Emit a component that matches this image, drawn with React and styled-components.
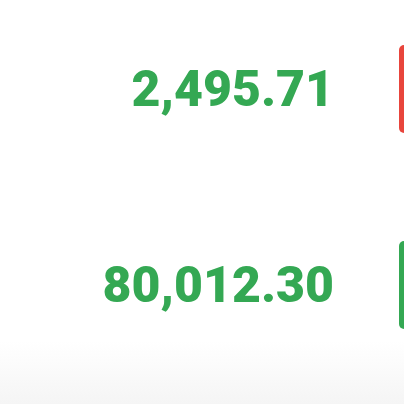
import React from "react";
import styled, { createGlobalStyle } from "styled-components";

const GlobalStyle = createGlobalStyle`
  html, body {
    margin: 0;
    padding: 0;
    background: #ffffff;
  }
  body {
    font-family: Roboto, "Liberation Sans", Arial, sans-serif;
  }
`;

const rows = [
  { value: "2,495.71", tone: "red" },
  { value: "80,012.30", tone: "green" },
];

const tones = {
  red: "#e8453c",
  green: "#34a853",
};

function App() {
  return (
    <>
      <GlobalStyle />
      <Page>
        <List>
          {rows.map((row) => (
            <Row key={row.value}>
              <Value>{row.value}</Value>
              <Bar $tone={row.tone} />
            </Row>
          ))}
        </List>
        <Footer />
      </Page>
    </>
  );
}

export default App;

const Page = styled.div`
  width: 404px;
  height: 404px;
  display: flex;
  flex-direction: column;
  overflow: hidden;
  background: #ffffff;
`;

const List = styled.div`
  display: flex;
  flex-direction: column;
  gap: 108px;
  padding-top: 45px;
`;

const Row = styled.div`
  height: 88px;
  display: flex;
  align-items: center;
  justify-content: flex-end;
`;

const Value = styled.div`
  font-family: Roboto, "Liberation Sans", Arial, sans-serif;
  font-weight: 900;
  font-size: 50px;
  line-height: 1;
  color: #34a853;
  margin-right: 65px;
  letter-spacing: 0;
`;

const Bar = styled.div`
  width: 5px;
  height: 88px;
  flex-shrink: 0;
  border-radius: 7px 0 0 7px;
  background: ${({ $tone }) => tones[$tone]};
`;

const Footer = styled.div`
  flex: 1;
  margin-top: 12px;
  background: linear-gradient(#ffffff, #f8f8f8 70%, #f5f5f5);
`;
